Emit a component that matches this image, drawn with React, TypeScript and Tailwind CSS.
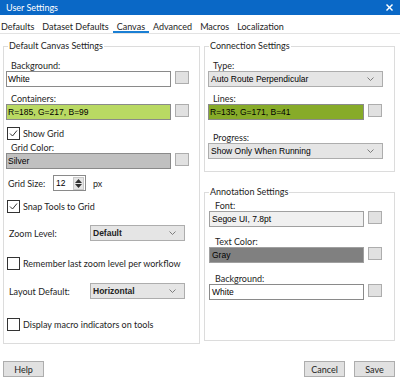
import React from "react";

const lbl = "font-['Lato',sans-serif] text-[9px] leading-[11px] text-[#1e1e1e]";
const inp = "font-['Liberation_Sans',Arial,sans-serif] text-[8.5px] text-[#000]";

function Swatch() {
  return <div className="ml-[4px] w-[14px] h-[13px] bg-[#e1e1e1] border border-[#adadad] shrink-0" />;
}

function Chevron() {
  return (
    <svg width="7" height="4" viewBox="0 0 7 4" className="shrink-0">
      <polyline points="0.5,0.5 3.5,3.5 6.5,0.5" fill="none" stroke="#707070" strokeWidth="0.9" />
    </svg>
  );
}

function Check({ checked }: { checked: boolean }) {
  return (
    <div className="w-[13px] h-[13px] border border-[#333] bg-white flex items-center justify-center shrink-0">
      {checked && (
        <svg width="9" height="9" viewBox="0 0 9 9">
          <polyline points="1,4.5 3.5,7 8,1.5" fill="none" stroke="#333" strokeWidth="1" />
        </svg>
      )}
    </div>
  );
}

function Dropdown({ text, w, bold }: { text: string; w: string; bold?: boolean }) {
  return (
    <div className={`${w} h-[16px] bg-[#e5e5e5] border border-[#adadad] flex items-center justify-between pl-[2px] pr-[8px] shrink-0`}>
      <span className={`${inp} ${bold ? "font-bold text-[#222]" : ""}`}>{text}</span>
      <Chevron />
    </div>
  );
}

export default function App() {
  return (
    <div className="w-[400px] h-[377px] bg-white flex flex-col overflow-hidden">
      {/* title bar */}
      <div className="h-[15px] bg-[#0a68c6] flex items-center justify-between pl-[6px] pr-[7px] shrink-0">
        <span className="font-['Lato',sans-serif] text-[9px] text-white">User Settings</span>
        <svg width="7" height="7" viewBox="0 0 7 7">
          <line x1="0.5" y1="0.5" x2="6.5" y2="6.5" stroke="white" strokeWidth="1.4" />
          <line x1="6.5" y1="0.5" x2="0.5" y2="6.5" stroke="white" strokeWidth="1.4" />
        </svg>
      </div>
      {/* tabs */}
      <div className="h-[19px] border-b border-[#e3e3e3] flex items-stretch shrink-0">
        <div className="flex items-stretch -ml-[3px]">
          {["Defaults", "Dataset Defaults", "Canvas", "Advanced", "Macros", "Localization"].map((t) => (
            <div
              key={t}
              className={`px-[4px] flex items-center pt-[6px] ${lbl} ${
                t === "Canvas" ? "border-b-2 border-[#1a7fd4] text-[#1a5fa8]" : "border-b-2 border-transparent"
              }`}
            >
              {t}
            </div>
          ))}
        </div>
      </div>

      {/* groups */}
      <div className="flex pl-[3px] pt-[6px] gap-[4px]">
        <fieldset className="w-[197px] h-[304px] border border-[#dcdcdc] p-0 m-0 shrink-0">
          <legend className={`ml-[4px] px-[1px] ${lbl} leading-[12px]`}>Default Canvas Settings</legend>
          <div className="flex flex-col">
            <div className={`${lbl} mt-[8px] pl-[7px]`}>Background:</div>
            <div className="flex items-start ml-[2px]">
              <div className={`w-[165px] h-[16px] bg-white border border-[#8a8a8a] flex items-center pl-[1px] ${inp}`}>White</div>
              <Swatch />
            </div>
            <div className={`${lbl} mt-[6px] pl-[7px]`}>Containers:</div>
            <div className="flex items-start ml-[2px]">
              <div className={`w-[165px] h-[16px] bg-[#b9d963] border border-[#8a8a8a] flex items-center pl-[1px] ${inp}`}>R=185, G=217, B=99</div>
              <Swatch />
            </div>
            <div className="flex items-center mt-[7px] ml-[3px] gap-[3px]">
              <Check checked />
              <span className={lbl}>Show Grid</span>
            </div>
            <div className={`${lbl} mt-[2px] pl-[7px]`}>Grid Color:</div>
            <div className="flex items-start ml-[2px]">
              <div className={`w-[165px] h-[16px] bg-[#c0c0c0] border border-[#8a8a8a] flex items-center pl-[1px] ${inp}`}>Silver</div>
              <Swatch />
            </div>
            <div className="flex items-center mt-[6px] ml-[4px]">
              <span className={`${lbl} w-[45px]`}>Grid Size:</span>
              <div className="w-[33px] h-[16px] bg-white border border-[#8a8a8a] flex items-center justify-between pl-[2px] pr-[1px]">
                <span className={inp}>12</span>
                <div className="flex flex-col gap-[1px] bg-[#e5e5e5] border border-[#c8c8c8] px-[1px] py-[1px]">
                  <svg width="7" height="4" viewBox="0 0 7 4"><polygon points="3.5,0 7,4 0,4" fill="#333" /></svg>
                  <svg width="7" height="4" viewBox="0 0 7 4"><polygon points="0,0 7,0 3.5,4" fill="#333" /></svg>
                </div>
              </div>
              <span className={`${lbl} ml-[7px]`}>px</span>
            </div>
            <div className="flex items-center mt-[9px] ml-[3px] gap-[3px]">
              <Check checked />
              <span className={lbl}>Snap Tools to Grid</span>
            </div>
            <div className="flex items-center mt-[12px] ml-[5px]">
              <span className={`${lbl} w-[81px]`}>Zoom Level:</span>
              <Dropdown text="Default" w="w-[95px]" bold />
            </div>
            <div className="flex items-center mt-[16px] ml-[3px] gap-[3px]">
              <Check checked={false} />
              <span className={lbl}>Remember last zoom level per workflow</span>
            </div>
            <div className="flex items-center mt-[13px] ml-[5px]">
              <span className={`${lbl} w-[81px]`}>Layout Default:</span>
              <Dropdown text="Horizontal" w="w-[95px]" bold />
            </div>
            <div className="flex items-center mt-[19px] ml-[3px] gap-[3px]">
              <Check checked={false} />
              <span className={lbl}>Display macro indicators on tools</span>
            </div>
          </div>
        </fieldset>

        <div className="flex flex-col w-[191px] shrink-0">
          <fieldset className="h-[132px] border border-[#dcdcdc] p-0 m-0">
            <legend className={`ml-[4px] px-[1px] ${lbl} leading-[12px]`}>Connection Settings</legend>
            <div className="flex flex-col">
              <div className={`${lbl} mt-[8px] pl-[8px]`}>Type:</div>
              <div className="ml-[3px]">
                <Dropdown text="Auto Route Perpendicular" w="w-[175px]" />
              </div>
              <div className={`${lbl} mt-[6px] pl-[8px]`}>Lines:</div>
              <div className="flex items-start ml-[3px]">
                <div className={`w-[156px] h-[16px] bg-[#87ab29] border border-[#8a8a8a] flex items-center pl-[1px] ${inp}`}>R=135, G=171, B=41</div>
                <Swatch />
              </div>
              <div className={`${lbl} mt-[12px] pl-[8px]`}>Progress:</div>
              <div className="ml-[3px]">
                <Dropdown text="Show Only When Running" w="w-[175px]" />
              </div>
            </div>
          </fieldset>
          <fieldset className="mt-[14px] h-[155px] border border-[#dcdcdc] p-0 m-0">
            <legend className={`ml-[4px] px-[1px] ${lbl} leading-[12px]`}>Annotation Settings</legend>
            <div className="flex flex-col">
              <div className={`${lbl} mt-[2px] pl-[10px]`}>Font:</div>
              <div className="flex items-start ml-[4px]">
                <div className={`w-[155px] h-[16px] bg-[#f0f0f0] border border-[#a0a0a0] flex items-center pl-[2px] ${inp}`}>Segoe UI, 7.8pt</div>
                <Swatch />
              </div>
              <div className={`${lbl} mt-[9px] pl-[10px]`}>Text Color:</div>
              <div className="flex items-start ml-[4px]">
                <div className={`w-[155px] h-[16px] bg-[#808080] border border-[#a0a0a0] flex items-center pl-[2px] ${inp}`}>Gray</div>
                <Swatch />
              </div>
              <div className={`${lbl} mt-[10px] pl-[10px]`}>Background:</div>
              <div className="flex items-start ml-[4px]">
                <div className={`w-[155px] h-[16px] bg-white border border-[#8a8a8a] flex items-center pl-[2px] ${inp}`}>White</div>
                <Swatch />
              </div>
            </div>
          </fieldset>
        </div>
      </div>

      {/* buttons */}
      <div className="flex items-center mt-[17px] pl-[3px] pr-[5px]">
        <div className={`w-[41px] h-[16px] bg-[#e1e1e1] border border-[#adadad] flex items-center justify-center ${lbl}`}>Help</div>
        <div className="flex-1" />
        <div className={`w-[41px] h-[16px] bg-[#e1e1e1] border border-[#adadad] flex items-center justify-center ${lbl}`}>Cancel</div>
        <div className={`ml-[9px] w-[41px] h-[16px] bg-[#e1e1e1] border border-[#adadad] flex items-center justify-center ${lbl}`}>Save</div>
      </div>
    </div>
  );
}
